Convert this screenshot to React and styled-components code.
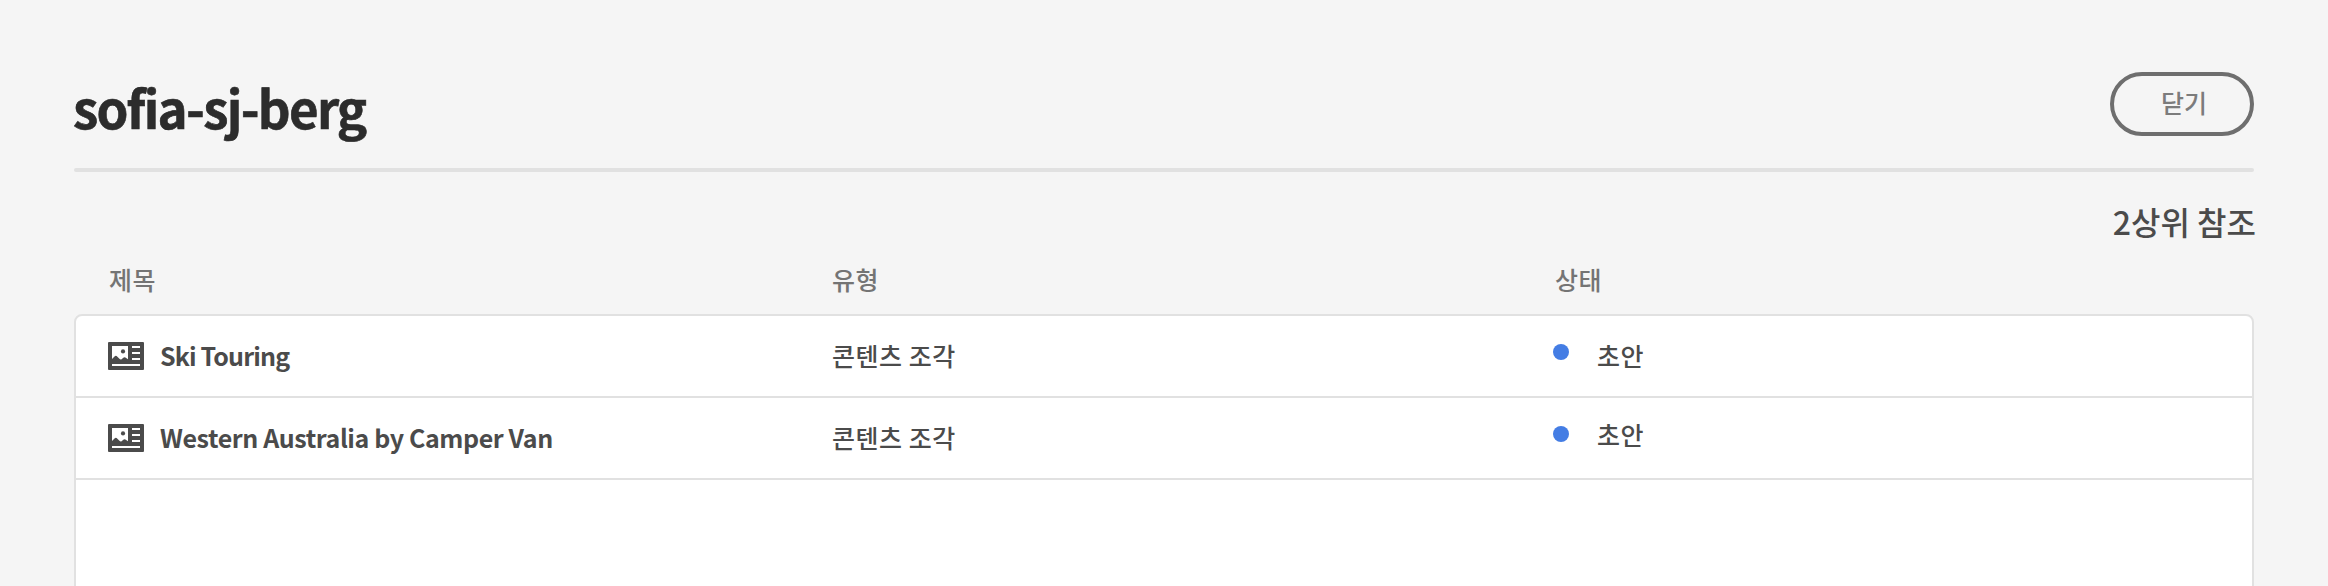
import React from 'react';
import styled, { createGlobalStyle } from 'styled-components';

const GlobalStyle = createGlobalStyle`
  * { box-sizing: border-box; }
  html, body { margin: 0; background: #f5f5f5; }
  body {
    font-family: "Noto Sans CJK KR", "Noto Sans", sans-serif;
    color: #4b4b4b;
  }
`;

const Page = styled.main`
  width: 2328px;
  height: 586px;
  padding: 72px 74px 0;
  overflow: hidden;
  background: #f5f5f5;
`;

const Header = styled.header`
  display: flex;
  justify-content: space-between;
  align-items: flex-start;
  height: 96px;
`;

const Title = styled.h1`
  margin: 0 0 0 -1px;
  font-size: 51px;
  line-height: 70px;
  font-weight: 700;
  letter-spacing: -1.7px;
  color: #2c2c2c;
  -webkit-text-stroke: 0.6px #2c2c2c;
  white-space: nowrap;
`;

const CloseButton = styled.button`
  width: 144px;
  height: 64px;
  padding: 0 0 4px 4px;
  border: 4px solid #6e6e6e;
  border-radius: 32px;
  background: transparent;
  color: #7c7c7c;
  font: 500 25px/36px "Noto Sans CJK KR", sans-serif;
`;

const Rule = styled.hr`
  height: 4px;
  margin: 0;
  border: 0;
  border-radius: 2px;
  background: #e1e1e1;
`;

const Count = styled.div`
  height: 82px;
  margin-right: -2px;
  padding-top: 25px;
  text-align: right;
  font-size: 32px;
  line-height: 48px;
  font-weight: 500;
  white-space: nowrap;
`;

const columns = `
  display: grid;
  grid-template-columns: 723px 723px 1fr;
`;

const HeadRow = styled.div`
  ${columns}
  height: 60px;
  padding: 5px 0 0 35px;
  font-size: 25px;
  line-height: 40px;
  font-weight: 500;
  letter-spacing: 0.4px;
  color: #747474;
`;

const Table = styled.div`
  height: 300px;
  border: 2px solid #e1e1e1;
  border-radius: 8px;
  background: #fff;
`;

const Row = styled.div`
  ${columns}
  height: 82px;
  padding-left: 32px;
  border-bottom: 2px solid #e1e1e1;
  font-size: 25px;
  line-height: 78px;
  font-weight: 500;
  white-space: nowrap;
`;

const TitleCell = styled.div`
  display: flex;
  height: 80px;
  font-weight: 700;
  letter-spacing: ${({ $spacing }) => $spacing};
`;

const Name = styled.span`
  margin-left: 16px;
`;

const Cell = styled.div`
  height: 80px;
  padding-left: 1px;
  letter-spacing: 0.5px;
`;

const StatusCell = styled.div`
  display: flex;
  gap: 28px;
  letter-spacing: 0.5px;
  line-height: ${({ $line }) => $line};
`;

const Dot = styled.span`
  width: 16px;
  height: 16px;
  margin: 28px 0 0 -1px;
  border-radius: 50%;
  background: #447de4;
`;

const IconSvg = styled.svg`
  display: block;
  flex: none;
  width: 36px;
  height: 28px;
  margin-top: 26px;
`;

function FragmentIcon() {
  return (
    <IconSvg viewBox="0 0 36 28" aria-hidden="true">
      <rect width="36" height="28" rx="1" fill="#4b4b4b" />
      <path
        fill="#fff"
        d="M4 4h16v13.200l-2.600-1.700q-1.100-.6-2.100.2l-1.700 1.500q-1 .8-1.900-.1l-3.100-3q-.9-.8-1.800.1L4 17z"
      />
      <circle cx="15" cy="9.400" r="2.100" fill="#4b4b4b" />
      <path fill="#fff" d="M24 4h8v2h-8zM24 10h8v2h-8zM24 16h8v2h-8zM4 22h28v2H4z" />
    </IconSvg>
  );
}

const references = [
  { title: 'Ski Touring', type: '콘텐츠 조각', status: '초안', spacing: '-0.85px', line: '78px' },
  { title: 'Western Australia by Camper Van', type: '콘텐츠 조각', status: '초안', spacing: '-0.4px', line: '72px' },
];

export default function App() {
  return (
    <>
      <GlobalStyle />
      <Page>
        <Header>
          <Title>sofia-sj-berg</Title>
          <CloseButton type="button">닫기</CloseButton>
        </Header>
        <Rule />
        <Count>2상위 참조</Count>
        <HeadRow>
          <span>제목</span>
          <span>유형</span>
          <span>상태</span>
        </HeadRow>
        <Table>
          {references.map((item) => (
            <Row key={item.title}>
              <TitleCell $spacing={item.spacing}>
                <FragmentIcon />
                <Name>{item.title}</Name>
              </TitleCell>
              <Cell>{item.type}</Cell>
              <StatusCell $line={item.line}>
                <Dot />
                <span>{item.status}</span>
              </StatusCell>
            </Row>
          ))}
        </Table>
      </Page>
    </>
  );
}
